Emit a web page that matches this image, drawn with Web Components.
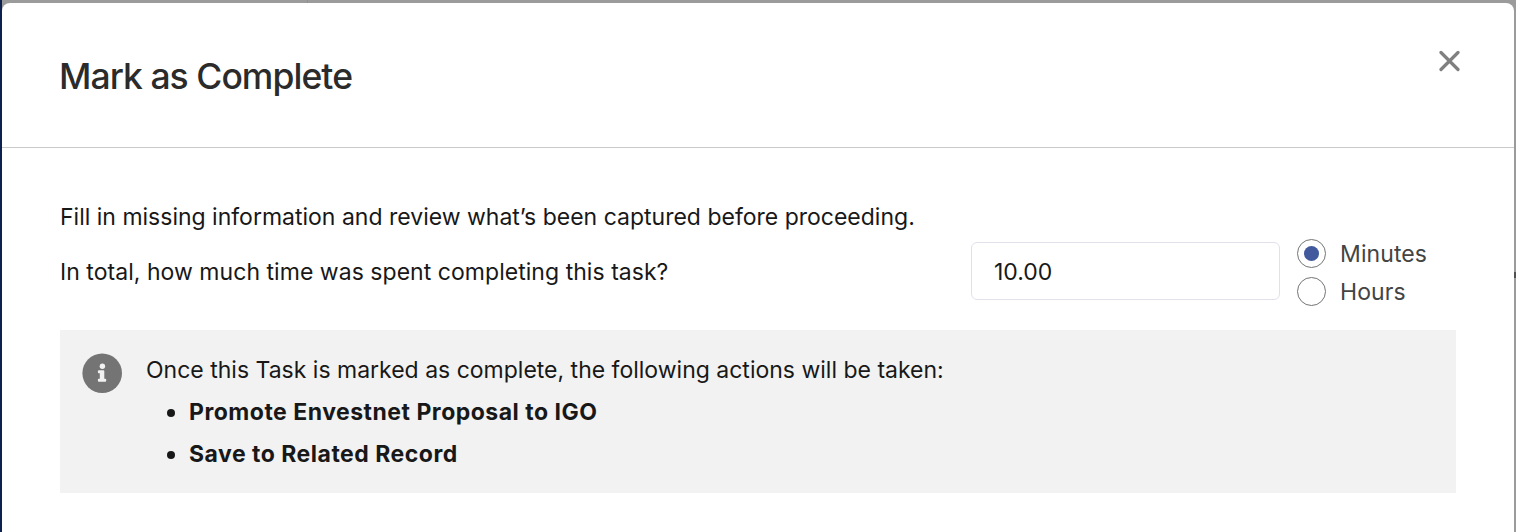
<!DOCTYPE html>
<html lang="en">
<head>
<meta charset="utf-8">
<title>Mark as Complete</title>
<style>
  body {
    margin: 0;
    height: 532px;
    overflow: hidden;
    background: linear-gradient(to right, #0d2150 50%, #9b9b9b 50%);
    font-family: Inter, "Liberation Sans", sans-serif;
    font-size: 23px;
    color: #181818;
  }
</style>
</head>
<body>
<page-backdrop>
  <modal-dialog>
    <span slot="title">Mark as Complete</span>
    <form-line>Fill in missing information and review what’s been captured before proceeding.</form-line>
    <time-question value="10.00">
      <span slot="label">In total, how much time was spent completing this task?</span>
      <radio-option checked>Minutes</radio-option>
      <radio-option>Hours</radio-option>
    </time-question>
    <info-notice>
      <span slot="message">Once this Task is marked as complete, the following actions will be taken:</span>
      <action-item>Promote Envestnet Proposal to IGO</action-item>
      <action-item>Save to Related Record</action-item>
    </info-notice>
  </modal-dialog>
</page-backdrop>

<script>
function attachTemplate(element, html) {
  const $template = document.createElement("template");
  $template.innerHTML = html;
  element.attachShadow({ mode: "open" });
  element.shadowRoot.appendChild($template.content.cloneNode(true));
}

class PageBackdrop extends HTMLElement {
  constructor() {
    super();
    attachTemplate(this, /*html*/ `
      <style>
        :host {
          position: relative;
          display: block;
          box-sizing: border-box;
          height: 532px;
          padding: 3px 2px 0 2px;
        }
        #mark {
          position: absolute;
          right: 0;
          top: 272px;
          width: 2px;
          height: 6px;
          background: #505050;
        }
        #tick {
          position: absolute;
          left: 307px;
          top: 0;
          width: 1px;
          height: 3px;
          background: #909090;
        }
        #bar {
          position: absolute;
          left: 2px;
          right: 0;
          top: 0;
          height: 14px;
          background: #9b9b9b;
        }
      </style>
      <div id="bar"></div>
      <div id="tick"></div>
      <slot></slot>
      <div id="mark"></div>
    `);
  }
}

class ModalDialog extends HTMLElement {
  constructor() {
    super();
    attachTemplate(this, /*html*/ `
      <style>
        :host {
          position: relative;
          display: block;
          height: 529px;
          border-radius: 8px 8px 0 0;
          background: #fff;
        }
        header {
          display: flex;
          justify-content: space-between;
          align-items: flex-start;
          box-sizing: border-box;
          height: 145px;
          padding: 47px 53px 0 57px;
          border-bottom: 1px solid #c9c9c9;
        }
        h1 {
          margin: 4px 0 0;
          font-size: 35.5px;
          line-height: 46px;
          font-weight: 500;
          letter-spacing: -0.95px;
          color: #2b2b2b;
        }
        svg {
          display: block;
        }
        main {
          padding: 54px 58px 0;
        }
      </style>
      <header>
        <h1><slot name="title"></slot></h1>
        <svg width="22" height="22" viewBox="0 0 22 22" fill="none" stroke="#808080" stroke-width="3.2" stroke-linecap="round">
          <path d="M2 2.5L19 19.5M19 2.5L2 19.5"/>
        </svg>
      </header>
      <main><slot></slot></main>
    `);
  }
}

class FormLine extends HTMLElement {
  constructor() {
    super();
    attachTemplate(this, /*html*/ `
      <style>
        :host {
          display: block;
          height: 34px;
          line-height: 30px;
          white-space: nowrap;
        }
      </style>
      <slot></slot>
    `);
  }
}

class TimeQuestion extends HTMLElement {
  constructor() {
    super();
    attachTemplate(this, /*html*/ `
      <style>
        :host {
          display: flex;
          align-items: center;
          height: 70px;
        }
        #label {
          flex: 1;
          padding-top: 2px;
          letter-spacing: 0.04px;
          white-space: nowrap;
        }
        input {
          box-sizing: border-box;
          width: 309px;
          height: 58px;
          margin: 0 17px 0 0;
          padding: 1px 21px 0 22px;
          border: 1px solid #e1e1ec;
          border-radius: 6px;
          background: #fff;
          font: inherit;
          color: inherit;
          outline: none;
        }
        #options {
          display: flex;
          flex-direction: column;
          gap: 9px;
          width: 159px;
          padding-top: 3px;
        }
      </style>
      <div id="label"><slot name="label"></slot></div>
      <input type="text">
      <div id="options"><slot></slot></div>
    `);
    this.$input = this.shadowRoot.querySelector("input");
  }

  static get observedAttributes() {
    return ["value"];
  }

  attributeChangedCallback(attrName, oldValue, newValue) {
    this.$input.value = newValue;
  }
}

class RadioOption extends HTMLElement {
  constructor() {
    super();
    attachTemplate(this, /*html*/ `
      <style>
        :host {
          display: flex;
          align-items: center;
          gap: 14px;
          height: 29px;
          line-height: 30px;
          letter-spacing: 0.1px;
          color: #444;
        }
        #circle {
          display: flex;
          align-items: center;
          justify-content: center;
          box-sizing: border-box;
          width: 29px;
          height: 29px;
          border: 1px solid #747474;
          border-radius: 50%;
        }
        :host([checked]) #circle::after {
          content: "";
          width: 15px;
          height: 15px;
          border-radius: 50%;
          background: #43599d;
        }
      </style>
      <div id="circle"></div>
      <slot></slot>
    `);
  }
}

class InfoNotice extends HTMLElement {
  constructor() {
    super();
    attachTemplate(this, /*html*/ `
      <style>
        :host {
          display: flex;
          gap: 24px;
          box-sizing: border-box;
          height: 163px;
          margin-top: 24px;
          padding: 19px 22px 0;
          background: #f2f2f2;
        }
        svg {
          flex: none;
          margin-top: 4px;
        }
        #message {
          line-height: 42px;
          white-space: nowrap;
        }
      </style>
      <svg width="40" height="40" viewBox="0 0 40 40">
        <circle cx="20.2" cy="20.2" r="19.8" fill="#747474"/>
        <circle cx="20.4" cy="13.2" r="2.7" fill="#f2f2f2"/>
        <path d="M16.9 17.2h4.5q.9 0 .9.9v7.6h1q.9 0 .9.9v1.2q0 .9-.9.9h-6.5q-.9 0-.9-.9v-1.2q0-.9.9-.9h1v-5.5h-1q-.9 0-.9-.9v-1.2q0-.9 1-.9z" fill="#f2f2f2"/>
      </svg>
      <div>
        <div id="message"><slot name="message"></slot></div>
        <div role="list"><slot></slot></div>
      </div>
    `);
  }
}

class ActionItem extends HTMLElement {
  constructor() {
    super();
    attachTemplate(this, /*html*/ `
      <style>
        :host {
          display: flex;
          align-items: center;
          gap: 14px;
          height: 42px;
          padding-left: 21px;
          font-weight: 700;
          letter-spacing: 0.5px;
          white-space: nowrap;
        }
        #bullet {
          width: 8px;
          height: 8px;
          margin-top: 1px;
          border-radius: 50%;
          background: #181818;
        }
      </style>
      <div id="bullet"></div>
      <slot></slot>
    `);
  }
}

window.customElements.define("page-backdrop", PageBackdrop);
window.customElements.define("modal-dialog", ModalDialog);
window.customElements.define("form-line", FormLine);
window.customElements.define("time-question", TimeQuestion);
window.customElements.define("radio-option", RadioOption);
window.customElements.define("info-notice", InfoNotice);
window.customElements.define("action-item", ActionItem);
</script>
</body>
</html>
